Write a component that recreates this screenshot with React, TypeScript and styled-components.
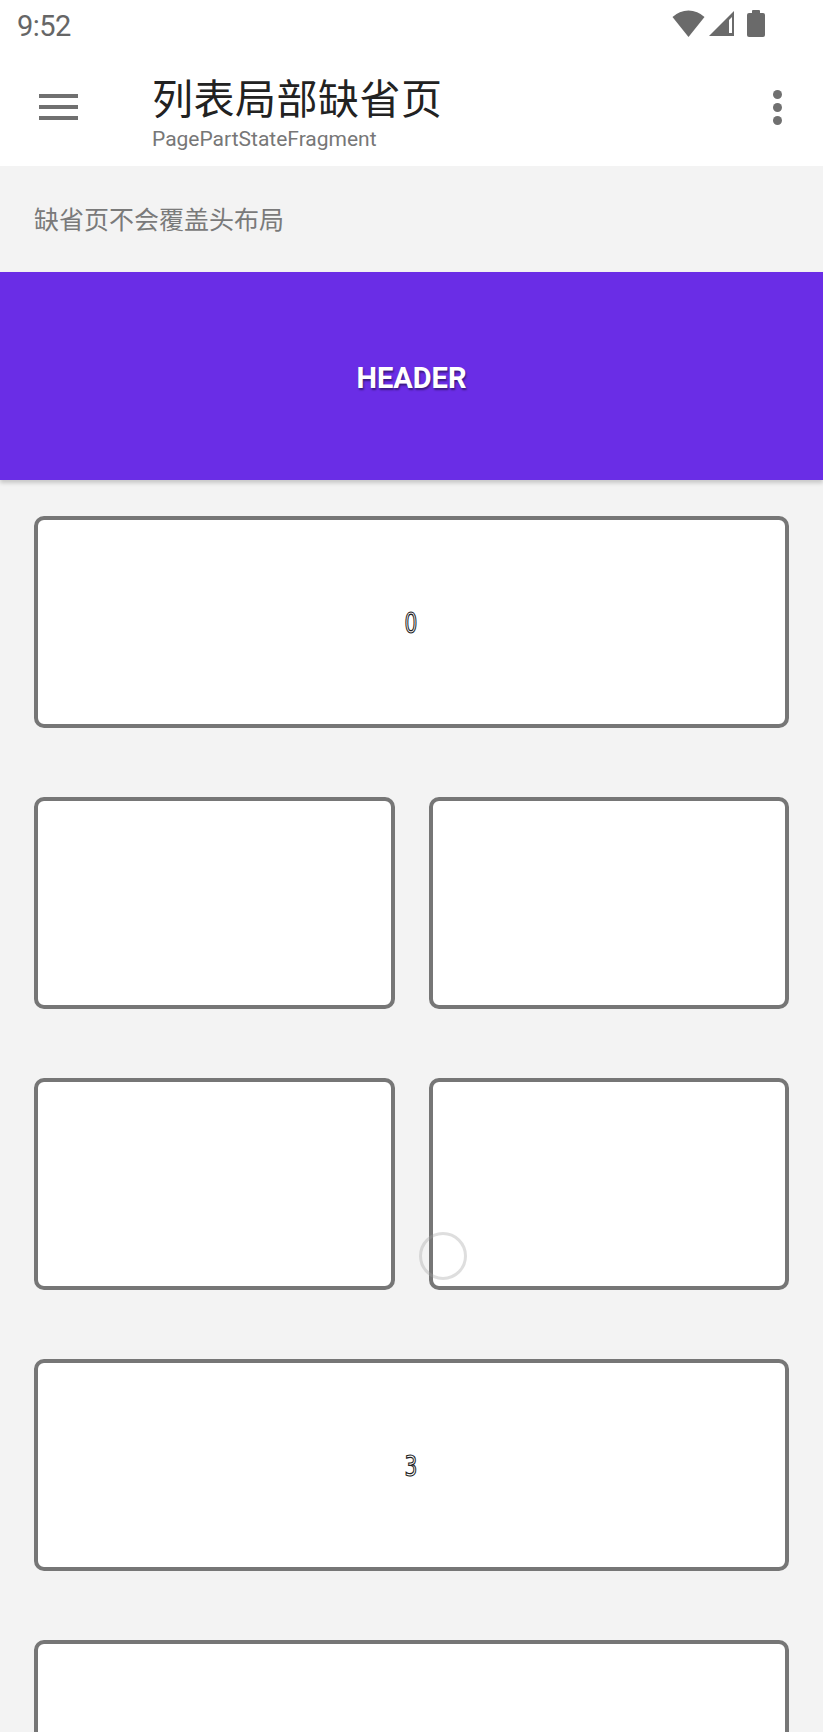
import React from 'react';
import styled, { createGlobalStyle } from 'styled-components';

const GlobalStyle = createGlobalStyle`
  body {
    margin: 0;
    background: #f3f3f3;
    font-family: Roboto, "Noto Sans CJK SC", sans-serif;
  }
`;

const Screen = styled.div`
  width: 823px;
  height: 1732px;
  overflow: hidden;
  position: relative;
  background: #f3f3f3;
`;

const StatusBar = styled.div`
  height: 50px;
  background: #fff;
  display: flex;
  align-items: center;
  justify-content: space-between;
  padding: 0 46px 0 17px;
`;

const Time = styled.span`
  font-family: Roboto, sans-serif;
  font-size: 29px;
  color: #666;
  letter-spacing: -0.5px;
  margin-top: 1px;
`;

const StatusIcons = styled.div`
  display: flex;
  align-items: center;
  gap: 4px;
  margin-top: -3px;
`;

const Toolbar = styled.div`
  height: 116px;
  background: #fff;
  display: flex;
  align-items: center;
  padding: 0 41px 0 39px;
`;

const Hamburger = styled.div`
  width: 39px;
  display: flex;
  flex-direction: column;
  gap: 7px;
  margin-top: -2px;

  span {
    display: block;
    height: 4px;
    background: #707070;
  }
`;

const TitleBlock = styled.div`
  flex: 1;
  display: flex;
  flex-direction: column;
  margin-left: 74px;
  margin-top: 6px;
`;

const Title = styled.div`
  font-family: "Noto Sans CJK SC", sans-serif;
  font-size: 41px;
  line-height: 50px;
  color: #222;
  letter-spacing: 0.5px;
`;

const Subtitle = styled.div`
  font-family: Roboto, sans-serif;
  font-size: 21px;
  line-height: 26px;
  color: #777;
  margin-top: 5px;
`;

const Kebab = styled.div`
  display: flex;
  flex-direction: column;
  gap: 4px;
  margin-top: -2px;

  span {
    width: 9px;
    height: 9px;
    border-radius: 50%;
    background: #707070;
  }
`;

const Hint = styled.div`
  height: 106px;
  display: flex;
  align-items: center;
  padding-left: 34px;
  font-family: "Noto Sans CJK SC", sans-serif;
  font-size: 25px;
  color: #7a7a7a;
  box-sizing: border-box;
  padding-bottom: 2px;
`;

const Header = styled.div`
  height: 208px;
  background: #6a2de6;
  display: flex;
  align-items: center;
  justify-content: center;
  box-shadow: 0 3px 4px rgba(0, 0, 0, 0.18);
  position: relative;
  z-index: 1;
`;

const HeaderText = styled.span`
  font-family: Roboto, sans-serif;
  font-weight: bold;
  font-size: 29px;
  color: #fff;
  text-shadow: 1px 2px 2px rgba(0, 0, 0, 0.45);
  margin-top: 3px;
`;

const Grid = styled.div`
  display: grid;
  grid-template-columns: 1fr 1fr;
  column-gap: 34px;
  row-gap: 69px;
  padding: 36px 34px;
`;

const Card = styled.div<{ $full?: boolean }>`
  grid-column: ${(p) => (p.$full ? '1 / span 2' : 'auto')};
  height: 212px;
  box-sizing: border-box;
  border: 4px solid #767676;
  border-radius: 10px;
  background: #fff;
  display: flex;
  align-items: center;
  justify-content: center;
`;

const CardNumber = styled.span`
  font-family: "DejaVu Sans Condensed", "DejaVu Sans", sans-serif;
  font-size: 28px;
  color: #fff;
  -webkit-text-stroke: 1.2px #222;
  transform: scaleX(0.8);
  margin-top: 2px;
`;

const TouchRing = styled.div`
  position: absolute;
  left: 419px;
  top: 1232px;
  width: 48px;
  height: 48px;
  box-sizing: border-box;
  border-radius: 50%;
  border: 3px solid rgba(160, 160, 160, 0.35);
  z-index: 2;
`;

const items: { full: boolean; label?: string }[] = [
  { full: true, label: '0' },
  { full: false },
  { full: false },
  { full: false },
  { full: false },
  { full: true, label: '3' },
  { full: true },
];

const App = () => {
  return (
    <>
      <GlobalStyle />
      <Screen>
        <StatusBar>
          <Time>9:52</Time>
          <StatusIcons>
            <svg width="33" height="27" viewBox="0 0 33 27">
              <path d="M0.5 7 A23 23 0 0 1 32.5 7 L16.5 27 Z" fill="#6a6a6a" />
            </svg>
            <svg width="26" height="25" viewBox="0 0 26 25">
              <path d="M25 0 L25 25 L0 25 Z" fill="#6a6a6a" />
              <path d="M20 9 L20 22 L23 22 L23 6 Z" fill="#fff" />
            </svg>
            <svg width="30" height="27" viewBox="0 0 30 27" style={{ marginLeft: 8 }}>
              <rect x="5" y="0" width="8" height="4" rx="1" fill="#6a6a6a" />
              <rect x="0" y="3" width="18" height="24" rx="2" fill="#6a6a6a" />
            </svg>
          </StatusIcons>
        </StatusBar>

        <Toolbar>
          <Hamburger>
            <span />
            <span />
            <span />
          </Hamburger>
          <TitleBlock>
            <Title>列表局部缺省页</Title>
            <Subtitle>PagePartStateFragment</Subtitle>
          </TitleBlock>
          <Kebab>
            <span />
            <span />
            <span />
          </Kebab>
        </Toolbar>

        <Hint>缺省页不会覆盖头布局</Hint>

        <Header>
          <HeaderText>HEADER</HeaderText>
        </Header>

        <Grid>
          {items.map((item, i) => (
            <Card key={i} $full={item.full}>
              {item.label && <CardNumber>{item.label}</CardNumber>}
            </Card>
          ))}
        </Grid>

        <TouchRing />
      </Screen>
    </>
  );
};

export default App;
